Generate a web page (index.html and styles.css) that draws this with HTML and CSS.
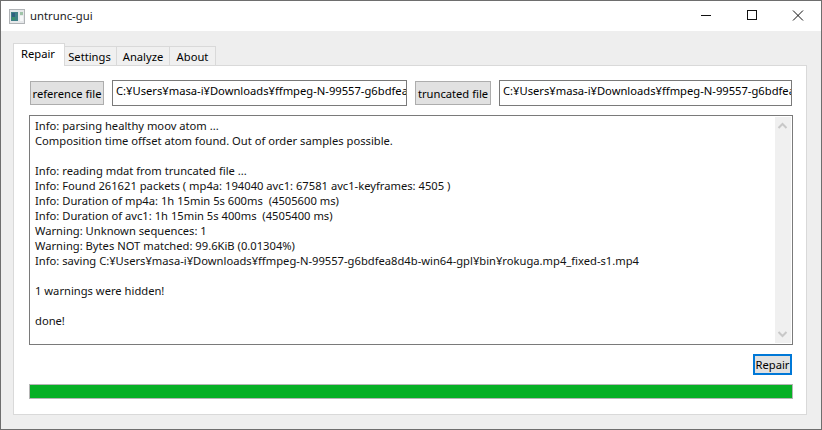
FILE: index.html
```html
<!DOCTYPE html>
<html lang="en">
<head>
<meta charset="utf-8">
<title>untrunc-gui</title>
<link rel="stylesheet" href="styles.css">
</head>
<body>
<div class="window">
  <header class="titlebar">
    <svg class="app-icon" width="16" height="15" viewBox="0 0 16 15">
      <rect x="0.500" y="0.500" width="15" height="14" fill="#e6e8ea" stroke="#b0b3b6"/>
      <rect x="2" y="3" width="7" height="9" fill="#3f7f86"/>
      <rect x="3" y="4" width="3" height="4" fill="#2f5f80"/>
      <rect x="3" y="8" width="3" height="3" fill="#3b8f6a"/>
      <rect x="11" y="3" width="3" height="3" fill="#9fc3a8"/>
      <rect x="11" y="7" width="3" height="5" fill="#f6f7f8"/>
    </svg>
    <span class="title">untrunc-gui</span>
    <div class="controls">
      <svg width="46" height="30" viewBox="0 0 46 30"><path d="M18 14.500H28" stroke="#111" fill="none"/></svg>
      <svg width="46" height="30" viewBox="0 0 46 30"><rect x="18.500" y="9.500" width="9" height="9" stroke="#111" fill="none"/></svg>
      <svg width="46" height="30" viewBox="0 0 46 30"><path d="M18 9.500L28 19.500M28 9.500L18 19.500" stroke="#111" fill="none"/></svg>
    </div>
  </header>
  <main class="body">
    <nav class="tabs">
      <div class="tab active">Repair</div>
      <div class="tab w-settings">Settings</div>
      <div class="tab w-analyze">Analyze</div>
      <div class="tab w-about">About</div>
    </nav>
    <section class="pane">
      <div class="file-row">
        <button class="btn btn-ref">reference file</button>
        <div class="field field-ref">C:¥Users¥masa-i¥Downloads¥ffmpeg-N-99557-g6bdfea8d4b-win64-gpl¥bin¥rokuga.mp4</div>
        <button class="btn btn-trunc">truncated file</button>
        <div class="field field-trunc">C:¥Users¥masa-i¥Downloads¥ffmpeg-N-99557-g6bdfea8d4b-win64-gpl¥bin¥rokuga.mp4</div>
      </div>
      <div class="log">
        <div class="log-text">
          <div>Info: parsing healthy moov atom ...</div>
          <div>Composition time offset atom found. Out of order samples possible.</div>
          <div class="blank"></div>
          <div>Info: reading mdat from truncated file ...</div>
          <div>Info: Found 261621 packets ( mp4a: 194040 avc1: 67581 avc1-keyframes: 4505 )</div>
          <div>Info: Duration of mp4a: 1h 15min 5s 600ms&nbsp; (4505600 ms)</div>
          <div>Info: Duration of avc1: 1h 15min 5s 400ms&nbsp; (4505400 ms)</div>
          <div>Warning: Unknown sequences: 1</div>
          <div>Warning: Bytes NOT matched: 99.6KiB (0.01304%)</div>
          <div>Info: saving C:¥Users¥masa-i¥Downloads¥ffmpeg-N-99557-g6bdfea8d4b-win64-gpl¥bin¥rokuga.mp4_fixed-s1.mp4</div>
          <div class="blank"></div>
          <div>1 warnings were hidden!</div>
          <div class="blank"></div>
          <div>done!</div>
        </div>
        <div class="scrollbar">
          <svg width="16" height="17" viewBox="0 0 16 17"><path d="M3.500 11L7.500 7L11.500 11" stroke="#c8c8c8" stroke-width="2" fill="none"/></svg>
          <svg width="16" height="17" viewBox="0 0 16 17"><path d="M3.500 6L7.500 10L11.500 6" stroke="#c8c8c8" stroke-width="2" fill="none"/></svg>
        </div>
      </div>
      <div class="action-row"><button class="btn btn-repair">Repair</button></div>
      <div class="progress"><div class="progress-fill"></div></div>
    </section>
  </main>
</div>
</body>
</html>
```
FILE: styles.css
```css
* { box-sizing: border-box; }
html, body { margin: 0; padding: 0; }
body { width: 822px; height: 430px; overflow: hidden; background: #fff; font-family: "Noto Sans", Roboto, sans-serif; font-size: 11.200px; color: #000; }
.window { width: 822px; height: 430px; display: flex; flex-direction: column; border: 1px solid #6e6e6e; }
.titlebar { height: 30px; flex: none; display: flex; align-items: center; background: #fff; padding-left: 8px; }
.app-icon { flex: none; margin-right: 5px; }
.title { font-size: 11.300px; color: #222; padding-bottom: 2px; }
.controls { margin-left: auto; display: flex; }
.controls svg { display: block; }
.body { flex: 1; background: #eee; padding: 13px 14px 14px 12px; display: flex; flex-direction: column; }
.tabs { display: flex; align-items: flex-end; height: 22px; flex: none; position: relative; z-index: 1; margin-bottom: -1px; }
.tab { height: 20px; border: 1px solid #d9d9d9; border-left: 0; background: #f0f0f0; display: flex; align-items: center; justify-content: center; line-height: 1; padding-top: 1px; }
.tab.active { height: 23px; width: 52px; background: #fff; border-left: 1px solid #d9d9d9; border-bottom: 0; padding: 0 2px 2px 0; }
.w-settings { width: 52px; padding-right: 2px; }
.w-analyze { width: 53px; }
.w-about { width: 46px; }
.pane { flex: 1; background: #fff; border: 1px solid #d9d9d9; padding: 14px 13px 15px 15px; display: flex; flex-direction: column; }
.file-row { display: flex; align-items: flex-start; height: 26px; flex: none; }
.btn { font: inherit; color: #000; background: #e1e1e1; border: 1px solid #adadad; padding: 0; margin: 0; display: block; white-space: nowrap; }
.btn-ref { width: 74px; height: 24px; margin-left: 1px; margin-top: 1px; padding-top: 1px; }
.btn-trunc { width: 76px; height: 24px; margin-left: 8px; margin-top: 1px; padding-top: 1px; }
.field { height: 26px; border: 1px solid #7a7a7a; background: #fff; line-height: 20px; padding: 0 3px; white-space: nowrap; overflow: hidden; }
.field-ref { width: 295px; margin-left: 8px; }
.field-trunc { width: 293px; margin-left: 8px; }
.log { margin-top: 9px; height: 230px; flex: none; border: 1px solid #7a7a7a; display: flex; padding: 1px; }
.log-text { flex: 1; padding: 1px 0 0 4px; line-height: 15px; white-space: nowrap; overflow: hidden; color: #111; }
.blank { height: 15px; }
.scrollbar { width: 16px; flex: none; background: #f0f0f0; display: flex; flex-direction: column; justify-content: space-between; }
.scrollbar svg { display: block; }
.action-row { display: flex; justify-content: flex-end; margin-top: 9px; flex: none; }
.btn-repair { width: 39px; height: 21px; border: 2px solid #0078d7; margin-right: 1px; }
.progress { margin-top: 9px; height: 15px; flex: none; border: 1px solid #b5b5b5; background: #e6e6e6; }
.progress-fill { height: 100%; width: 100%; background: #06b025; }
```
